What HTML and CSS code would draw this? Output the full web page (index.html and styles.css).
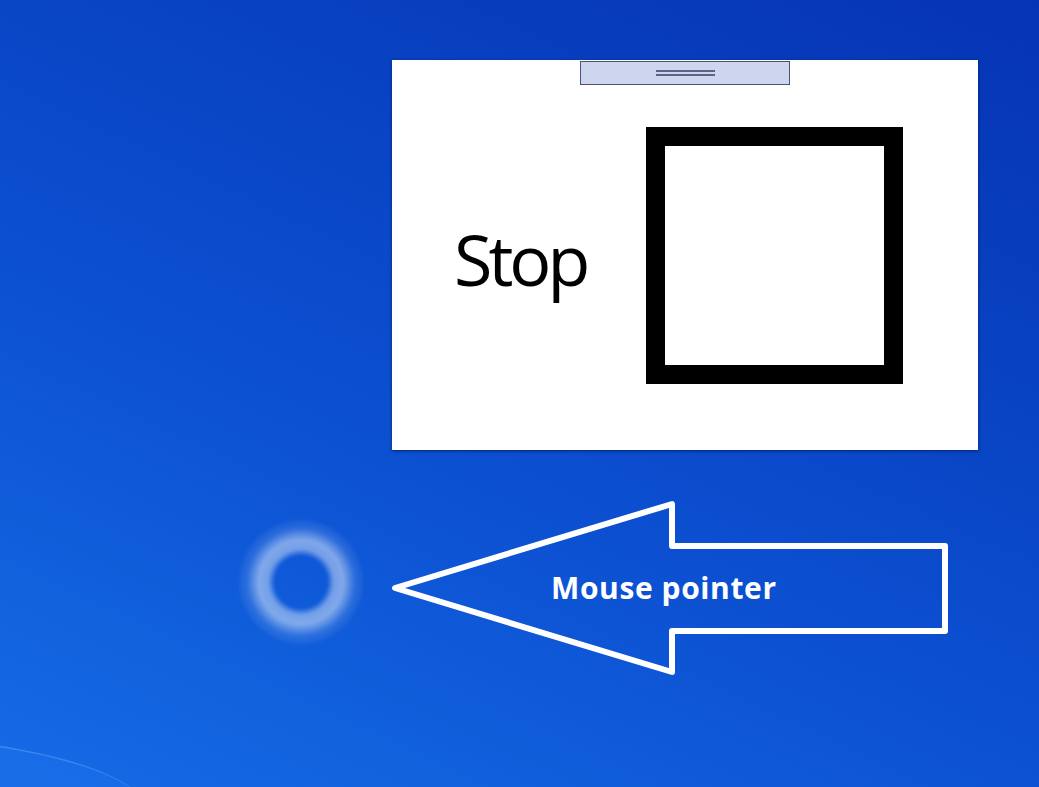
FILE: index.html
```html
<!DOCTYPE html>
<html>
<head>
<meta charset="utf-8">
<link rel="stylesheet" href="styles.css">
</head>
<body>
<div class="desktop">
  <div class="streak"></div>
  <div class="window">
    <div class="grip"><span class="grip-lines"></span></div>
    <div class="window-body">
      <span class="stop-label">Stop</span>
      <div class="stop-box"></div>
    </div>
  </div>
  <div class="pointer-ring"></div>
  <svg class="callout-arrow" width="1039" height="787" viewBox="0 0 1039 787">
    <polygon points="395,588 672,504 672,546 945,546 945,631 672,631 672,672" fill="none" stroke="#ffffff" stroke-width="6" stroke-linejoin="round"/>
  </svg>
  <div class="callout-text">Mouse pointer</div>
</div>
</body>
</html>
```
FILE: styles.css
```css
html, body {
  margin: 0;
  padding: 0;
  overflow: hidden;
}

.desktop {
  position: relative;
  width: 1039px;
  height: 787px;
  overflow: hidden;
  background: linear-gradient(205deg, #0634b4 0%, #0842c2 30%, #0c51d2 60%, #1262de 85%, #176ae6 100%);
  font-family: "Open Sans", "Noto Sans", sans-serif;
}

.streak {
  position: absolute;
  left: -450px;
  top: 735px;
  width: 600px;
  height: 160px;
  border-radius: 50%;
  border-top: 2px solid rgba(140, 200, 255, 0.3);
  background: rgba(40, 130, 245, 0.18);
}

.window {
  position: absolute;
  left: 392px;
  top: 60px;
  width: 586px;
  height: 390px;
  background: #ffffff;
  box-shadow: 0 1px 3px rgba(0, 0, 40, 0.55);
  display: flex;
  flex-direction: column;
  align-items: center;
}

.grip {
  margin-top: 1px;
  width: 208px;
  height: 22px;
  background: #cdd5ef;
  border: 1px solid #4b5274;
  display: flex;
  align-items: center;
  justify-content: center;
}

.grip-lines {
  width: 59px;
  height: 2px;
  border-top: 2px solid #5b6387;
  border-bottom: 2px solid #5b6387;
}

.window-body {
  align-self: stretch;
  display: flex;
  align-items: center;
  padding: 42px 0 0 62px;
  gap: 60px;
}

.stop-label {
  font-family: "Open Sans", "Noto Sans", sans-serif;
  font-size: 70px;
  line-height: 1;
  color: #000000;
  letter-spacing: -4px;
  margin-top: 6px;
}

.stop-box {
  width: 219px;
  height: 219px;
  border: 19px solid #000000;
  background: #ffffff;
}

.pointer-ring {
  position: absolute;
  left: 237px;
  top: 518px;
  width: 128px;
  height: 128px;
  border-radius: 50%;
  background: radial-gradient(circle closest-side, rgba(255,255,255,0) 0, rgba(255,255,255,0) 26px, rgba(255,255,255,0.42) 33px, rgba(255,255,255,0.48) 42px, rgba(255,255,255,0.3) 48px, rgba(255,255,255,0.12) 54px, rgba(255,255,255,0.06) 60px, rgba(255,255,255,0) 64px);
  filter: blur(1px);
}

.callout-arrow {
  position: absolute;
  left: 0;
  top: 0;
}

.callout-text {
  position: absolute;
  left: 551px;
  top: 568px;
  color: #ffffff;
  font-family: "Open Sans", "Noto Sans", sans-serif;
  font-weight: 700;
  font-size: 30px;
  line-height: 40px;
  letter-spacing: 0.6px;
}
```
